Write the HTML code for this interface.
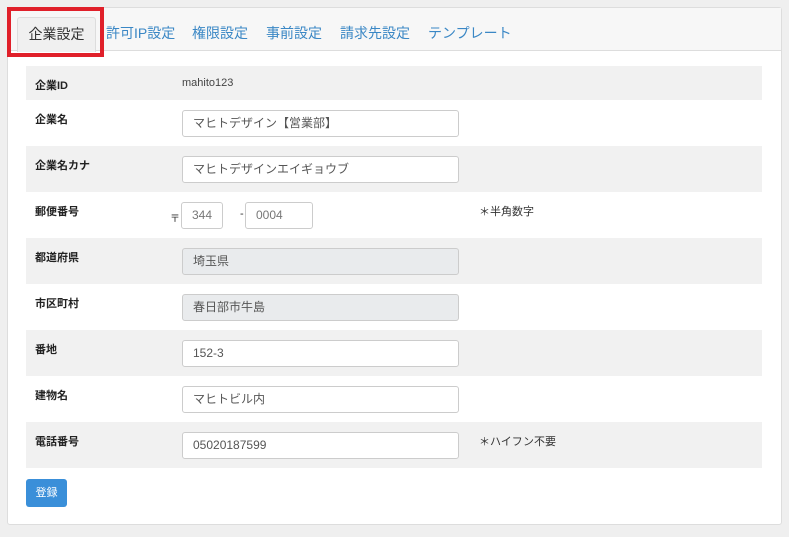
<!DOCTYPE html>
<html><head><meta charset="utf-8"><style>
*{box-sizing:border-box;margin:0;padding:0}
body{width:789px;height:537px;background:#efefef;font-family:"Liberation Sans","Noto Sans CJK JP",sans-serif;position:relative;overflow:hidden;color:#333}
.panel{position:absolute;left:7px;top:7px;width:775px;height:518px;background:#fff;border:1px solid #ddd;border-radius:3px}
.head{position:absolute;left:0;top:0;width:773px;height:43px;background:#f7f7f7;border-bottom:1px solid #ddd}
.tab{position:absolute;top:15px;font-size:14px;color:#3a87c5;white-space:nowrap}
.active{position:absolute;left:9px;top:9px;width:79px;height:35px;background:#f0f0f0;border:1px solid #ddd;border-bottom:none;border-radius:3px 3px 0 0;font-size:14px;color:#333;text-align:center;line-height:32px}
.red{position:absolute;left:7px;top:7px;width:97px;height:50px;border:4px solid #e0202a}
.row{position:absolute;left:26px;width:736px;height:46px}
.g{background:#f1f1f1}
.lbl{position:absolute;left:9px;top:11px;font-size:11px;font-weight:bold;color:#222}
.inp{position:absolute;left:156px;top:10px;width:277px;height:27px;border:1px solid #ccc;border-radius:3px;background:#fff;font-size:12px;color:#555;padding-left:10px;line-height:25px}
.dis{background:#e9ebed}
.note{position:absolute;left:453px;top:11px;font-size:11px;color:#333}
.btn{position:absolute;left:26px;top:479px;width:41px;height:28px;background:#3a8fd9;border-radius:3px;color:#fff;font-size:11px;text-align:center;line-height:28px}
</style></head><body>
<div class="panel"><div class="head">
<div class="active">企業設定</div>
<div class="tab" style="left:98px">許可IP設定</div>
<div class="tab" style="left:184px">権限設定</div>
<div class="tab" style="left:258px">事前設定</div>
<div class="tab" style="left:332px">請求先設定</div>
<div class="tab" style="left:420px">テンプレート</div>
</div></div>
<div class="red"></div>
<div class="row g" style="top:66px;height:34px"><div class="lbl" style="top:11px">企業ID</div><div style="position:absolute;left:156px;top:11px;font-size:11px;color:#444">mahito123</div></div>
<div class="row" style="top:100px"><div class="lbl">企業名</div><div class="inp">マヒトデザイン【営業部】</div></div>
<div class="row g" style="top:146px"><div class="lbl">企業名カナ</div><div class="inp">マヒトデザインエイギョウブ</div></div>
<div class="row" style="top:192px"><div class="lbl">郵便番号</div>
<div style="position:absolute;left:144px;top:18px;font-size:10px">〒</div>
<div class="inp" style="left:155px;width:42px;color:#777">344</div>
<div style="position:absolute;left:214px;top:16px;font-size:11px">-</div>
<div class="inp" style="left:219px;width:68px;color:#777">0004</div>
<div class="note">＊半角数字</div></div>
<div class="row g" style="top:238px"><div class="lbl">都道府県</div><div class="inp dis">埼玉県</div></div>
<div class="row" style="top:284px"><div class="lbl">市区町村</div><div class="inp dis">春日部市牛島</div></div>
<div class="row g" style="top:330px"><div class="lbl">番地</div><div class="inp">152-3</div></div>
<div class="row" style="top:376px"><div class="lbl">建物名</div><div class="inp">マヒトビル内</div></div>
<div class="row g" style="top:422px"><div class="lbl">電話番号</div><div class="inp">05020187599</div><div class="note">＊ハイフン不要</div></div>
<div class="btn">登録</div>
</body></html>
